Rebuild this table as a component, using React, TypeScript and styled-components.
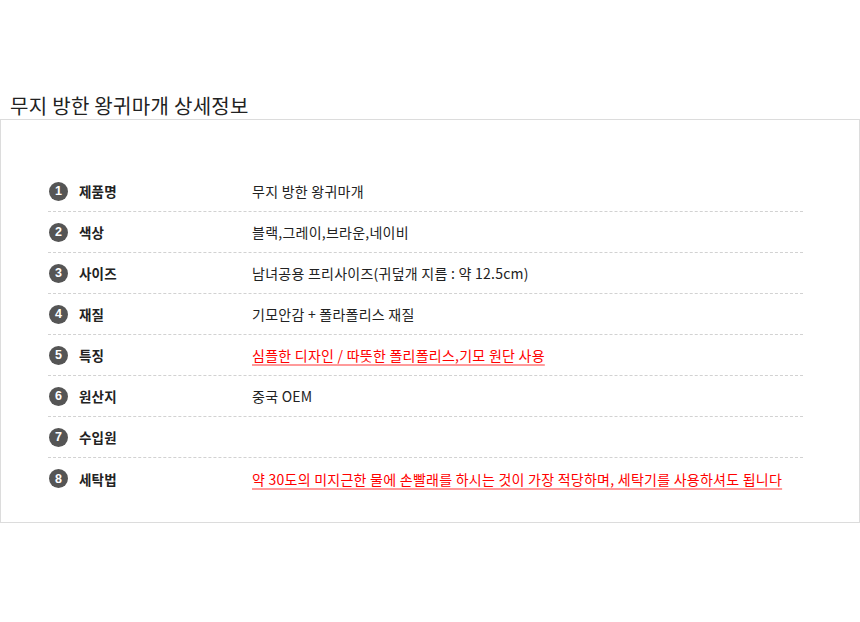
import React from "react";
import styled, { createGlobalStyle } from "styled-components";

const Global = createGlobalStyle`
  html, body { margin: 0; padding: 0; background: #fff; }
  body { font-family: "Noto Sans CJK KR", "Noto Sans", sans-serif; color: #222; }
`;

const Page = styled.div`
  padding-top: 92px;
  width: 860px;
`;

const Title = styled.h2`
  margin: 0 0 0 10px;
  font-size: 20px;
  font-weight: 400;
  letter-spacing: 0.3px;
  line-height: 27px;
  color: #222;
`;

const Box = styled.div`
  border: 1px solid #dcdcdc;
  padding: 51px 56px 23px 47px;
`;

const Table = styled.div`
  display: flex;
  flex-direction: column;
`;

const Row = styled.div`
  display: flex;
  align-items: center;
  height: 41px;
  box-sizing: border-box;
  border-bottom: 1px dashed #d2d2d2;
  &:last-child { border-bottom: none; }
`;

const Num = styled.span`
  width: 19px;
  height: 19px;
  border-radius: 50%;
  background: #555;
  color: #fff;
  font-family: "Liberation Sans", sans-serif;
  font-weight: 700;
  font-size: 12.5px;
  display: flex;
  align-items: center;
  justify-content: center;
  margin-left: 1px;
  flex-shrink: 0;
`;

const Label = styled.span`
  width: 173px;
  margin-left: 11px;
  font-size: 13.5px;
  font-weight: 700;
  letter-spacing: 0.2px;
  color: #222;
`;

const Value = styled.span<{ $hl?: boolean }>`
  font-size: 14px;
  letter-spacing: 0.25px;
  color: ${(p) => (p.$hl ? "#ff0000" : "#222")};
  ${(p) =>
    p.$hl
      ? `text-decoration: underline; text-decoration-color: #ff9a9a; text-decoration-thickness: 2px; text-underline-offset: 3px;`
      : ""}
`;

const rows: { label: string; value: string; hl?: boolean }[] = [
  { label: "제품명", value: "무지 방한 왕귀마개" },
  { label: "색상", value: "블랙,그레이,브라운,네이비" },
  { label: "사이즈", value: "남녀공용 프리사이즈(귀덮개 지름 : 약 12.5cm)" },
  { label: "재질", value: "기모안감 + 폴라폴리스 재질" },
  { label: "특징", value: "심플한 디자인 / 따뜻한 폴리폴리스,기모 원단 사용", hl: true },
  { label: "원산지", value: "중국 OEM" },
  { label: "수입원", value: "" },
  {
    label: "세탁법",
    value: "약 30도의 미지근한 물에 손빨래를 하시는 것이 가장 적당하며, 세탁기를 사용하셔도 됩니다",
    hl: true,
  },
];

export default function App() {
  return (
    <>
      <Global />
      <Page>
        <Title>무지 방한 왕귀마개 상세정보</Title>
        <Box>
          <Table>
            {rows.map((r, i) => (
              <Row key={r.label}>
                <Num>{i + 1}</Num>
                <Label>{r.label}</Label>
                <Value $hl={r.hl}>{r.value}</Value>
              </Row>
            ))}
          </Table>
        </Box>
      </Page>
    </>
  );
}
